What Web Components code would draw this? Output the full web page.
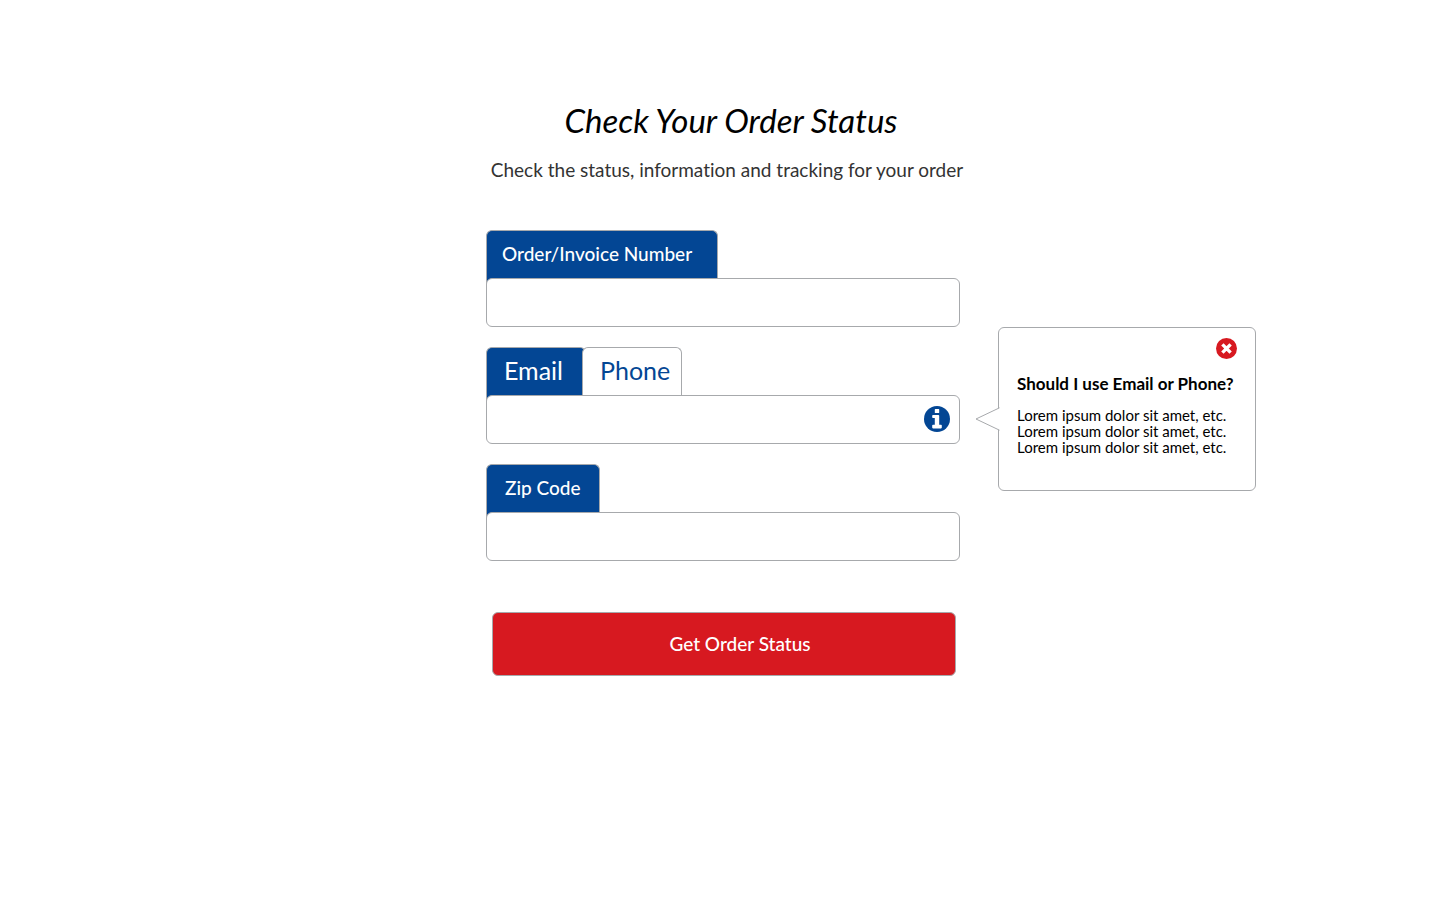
<!DOCTYPE html>
<html lang="en">
<head>
<meta charset="utf-8">
<meta name="viewport" content="width=device-width, initial-scale=1">
<title>Check Your Order Status</title>
<style>
  body {
    margin: 0;
    background: #fff;
    color: #000;
    font-family: Lato, "Liberation Sans", sans-serif;
    font-variant-ligatures: none;
    --blue: #034694;
    --red: #d71920;
    --line: #a7a9ac;
  }
</style>
</head>
<body>
<order-status-page></order-status-page>

<template id="page-template">
  <style>
    :host { display: block; padding: 98px 16px 48px 22px; }
    main { max-width: 474px; margin: 0 auto; }
    header { display: flex; flex-direction: column; align-items: center; text-align: center; margin-bottom: 46px; }
    h1 { margin: 0 0 14px; padding-left: 16px; font-size: 33px; line-height: 44px; font-weight: 400; font-style: italic; }
    p { margin: 0; padding-left: 8px; font-size: 19px; line-height: 28px; color: #333; white-space: nowrap; }
    form { display: flex; flex-direction: column; gap: 20px; }
    @media (max-width: 520px) { p { white-space: normal; } }
  </style>
  <main>
    <header>
      <h1>Check Your Order Status</h1>
      <p>Check the status, information and tracking for your order</p>
    </header>
    <form>
      <order-field label="Order/Invoice Number" name="order"></order-field>
      <contact-field>
        <help-bubble>
          <span slot="title">Should I use Email or Phone?</span>
          Lorem ipsum dolor sit amet, etc.<br>
          Lorem ipsum dolor sit amet, etc.<br>
          Lorem ipsum dolor sit amet, etc.
        </help-bubble>
      </contact-field>
      <order-field class="zip" label="Zip Code" name="zip"></order-field>
      <submit-button>Get Order Status</submit-button>
    </form>
  </main>
</template>

<template id="field-template">
  <style>
    :host { display: flex; flex-direction: column; align-items: flex-start; }
    label {
      box-sizing: border-box; height: 54px; margin-bottom: -6px; padding: 0 25px 0 15px;
      border: 1px solid var(--line); border-bottom: 0; border-radius: 6px 6px 0 0;
      background: var(--blue); color: #fff; font-size: 19px; line-height: 46px; font-weight: 500;
    }
    :host(.zip) label { padding: 0 18px; }
    input {
      box-sizing: border-box; position: relative; width: 100%; height: 49px; margin: 0; padding: 0 16px;
      border: 1px solid var(--line); border-radius: 6px; background: #fff; font: inherit; font-size: 19px;
    }
  </style>
  <label for="value"></label>
  <input id="value" type="text">
</template>

<template id="contact-template">
  <style>
    :host { display: block; position: relative; }
    .tabs { display: flex; }
    .tabs button {
      box-sizing: border-box; height: 54px; margin: 0 0 -6px; padding: 0 17px 10px;
      border: 1px solid var(--line); border-bottom: 0; border-radius: 6px 6px 0 0;
      background: #fff; color: var(--blue); font: inherit; font-size: 25px; line-height: 42px; cursor: pointer;
    }
    .tabs button:first-child { min-width: 100px; text-align: left; }
    .tabs button + button { min-width: 100px; margin-left: -4px; padding-right: 11px; text-align: left; }
    .tabs button[aria-selected="true"] { background: var(--blue); color: #fff; }
    .box {
      box-sizing: border-box; position: relative; display: flex; align-items: center; height: 49px; padding-right: 9px;
      border: 1px solid var(--line); border-radius: 6px; background: #fff;
    }
    input { flex: 1; min-width: 0; height: 100%; box-sizing: border-box; padding: 0 16px; border: 0; border-radius: 6px; background: none; font: inherit; font-size: 19px; }
    .info { width: 26px; height: 28px; padding: 0 0 2px; border: 0; background: none; cursor: pointer; }
    .info svg { display: block; width: 26px; height: 26px; }
    ::slotted(help-bubble) { position: absolute; left: calc(100% + 38px); top: -20px; }
    @media (max-width: 1080px) {
      ::slotted(help-bubble) { position: relative; left: 0; top: 0; margin-top: 20px; }
    }
  </style>
  <div class="tabs" role="tablist">
    <button type="button" role="tab" aria-selected="true">Email</button>
    <button type="button" role="tab" aria-selected="false">Phone</button>
  </div>
  <div class="box">
    <input type="text" aria-label="Email">
    <button class="info" type="button" aria-label="Help">
      <svg viewBox="0 0 26 26"><circle cx="13" cy="13" r="13" fill="#034694"/><path fill="#fff" d="M11.400 3h3.200q.6 0 .6.6v2.800q0 .6-.6.6h-3.200q-.6 0-.6-.6V3.600q0-.6.6-.6zM9 9h5.400q.8 0 .8.800v9h1.800q.8 0 .8.800v2q0 .8-.8.8H9q-.8 0-.8-.8v-2q0-.8.8-.8h1.800v-6.800H9q-.8 0-.8-.8V9.800Q8.200 9 9 9z"/></svg>
    </button>
  </div>
  <slot></slot>
</template>

<template id="bubble-template">
  <style>
    :host { display: block; box-sizing: border-box; width: 258px; height: 164px; padding: 10px 17px 16px 18px; border: 1px solid var(--line); border-radius: 6px; background: #fff; }
    .close { display: block; width: 21px; height: 21px; margin: 0 1px 0 auto; padding: 0; border: 0; background: none; cursor: pointer; }
    .close svg { display: block; width: 21px; height: 21px; }
    h2 { margin: 14px 0 12px; font-size: 17px; line-height: 22px; font-weight: 700; white-space: nowrap; }
    p { margin: 0; font-size: 15px; line-height: 16px; }
    .arrow { position: absolute; right: 100%; top: 79px; width: 26px; height: 24px; margin-right: -1px; }
    @media (max-width: 1080px) { .arrow { display: none; } }
  </style>
  <svg class="arrow" viewBox="0 0 26 24" aria-hidden="true"><path fill="#fff" d="M26 .5L2 12l24 11.500z"/><path fill="none" stroke="#a7a9ac" d="M25.500 .8L2 12l23.500 11.200"/></svg>
  <button class="close" type="button" aria-label="Close">
    <svg viewBox="0 0 21 21"><circle cx="10.500" cy="10.500" r="10.500" fill="#d71920"/><path stroke="#fff" stroke-width="3.400" stroke-linecap="square" d="M7.600 7.600l5.800 5.800M13.400 7.600l-5.800 5.800"/></svg>
  </button>
  <h2><slot name="title"></slot></h2>
  <p><slot></slot></p>
</template>

<template id="submit-template">
  <style>
    :host { display: block; margin: 31px 4px 0 6px; }
    button {
      box-sizing: border-box; display: block; width: 100%; height: 64px; padding: 0 0 2px 32px;
      border: 1px solid var(--line); border-radius: 6px; background: var(--red); color: #fff;
      font: inherit; font-size: 19px; font-weight: 500; cursor: pointer;
    }
  </style>
  <button type="submit"><slot></slot></button>
</template>

<script>
  class TemplateElement extends HTMLElement {
    constructor() {
      super();
      const template = document.getElementById(this.constructor.template);
      this.attachShadow({ mode: "open" }).append(template.content.cloneNode(true));
    }
  }

  customElements.define("order-field", class extends TemplateElement {
    static template = "field-template";
    connectedCallback() {
      this.shadowRoot.querySelector("label").textContent = this.getAttribute("label");
      this.shadowRoot.querySelector("input").name = this.getAttribute("name");
    }
  });

  customElements.define("contact-field", class extends TemplateElement {
    static template = "contact-template";
    connectedCallback() {
      const tabs = [...this.shadowRoot.querySelectorAll("[role=tab]")];
      const input = this.shadowRoot.querySelector("input");
      for (const tab of tabs) {
        tab.addEventListener("click", () => {
          for (const other of tabs) other.setAttribute("aria-selected", String(other === tab));
          input.setAttribute("aria-label", tab.textContent);
        });
      }
      this.shadowRoot.querySelector(".info").addEventListener("click", () => {
        const bubble = this.querySelector("help-bubble");
        bubble.style.display = bubble.style.display === "none" ? "" : "none";
      });
    }
  });

  customElements.define("help-bubble", class extends TemplateElement {
    static template = "bubble-template";
    connectedCallback() {
      this.shadowRoot.querySelector(".close").addEventListener("click", () => { this.style.display = "none"; });
    }
  });

  customElements.define("submit-button", class extends TemplateElement {
    static template = "submit-template";
    connectedCallback() {
      this.shadowRoot.querySelector("button").addEventListener("click", () => this.closest("form")?.requestSubmit());
    }
  });

  customElements.define("order-status-page", class extends TemplateElement {
    static template = "page-template";
    connectedCallback() {
      this.shadowRoot.querySelector("form").addEventListener("submit", (event) => event.preventDefault());
    }
  });
</script>
</body>
</html>
